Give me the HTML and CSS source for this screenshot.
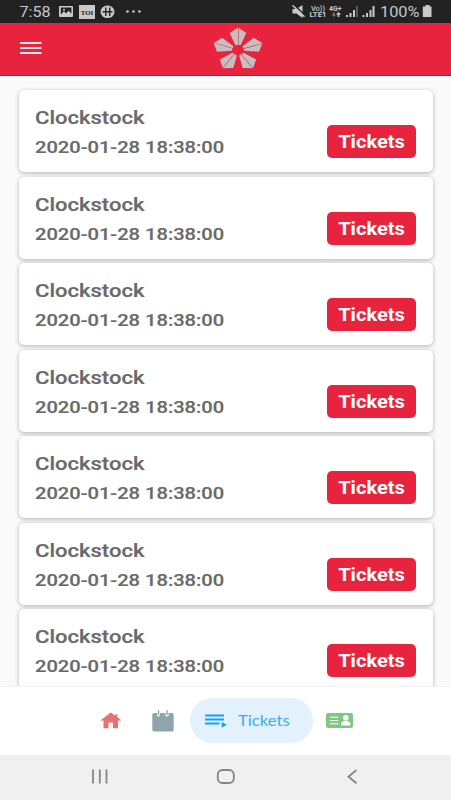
FILE: index.html
```html
<!DOCTYPE html>
<html lang="en">
<head>
<meta charset="utf-8">
<title>Tickets</title>
<link rel="stylesheet" href="styles.css">
</head>
<body>
<div class="status">
  <svg class="status-art" width="451" height="23" viewBox="0 0 451 23" fill="#c9c9c9">
    <text x="19.500" y="17" font-size="15.500" textLength="31" lengthAdjust="spacingAndGlyphs">7:58</text>
    <path fill-rule="evenodd" d="M60 6h12q1 0 1 1v9q0 1-1 1H60q-1 0-1-1V7q0-1 1-1zM60.800 7.500v7.300l3-3.500 2.300 2 2.600-2.500 2.700 3V7.500z"/>
    <circle cx="64" cy="9.700" r="1"/>
    <path d="M79 5h16v14H79z"/>
    <text class="serif" x="80.700" y="14.500" font-size="7" fill="#222" textLength="12.500" lengthAdjust="spacingAndGlyphs">TOI</text>
    <ellipse cx="107.500" cy="11.700" rx="7" ry="6.300"/>
    <path d="M105.800 7.500v8.500M109.700 7.500v8.500M102.500 11.700h10" stroke="#222" stroke-width="1.400" fill="none"/>
    <circle cx="127.500" cy="11.500" r="1.300"/><circle cx="133.500" cy="11.500" r="1.300"/><circle cx="139.500" cy="11.500" r="1.300"/>
    <path d="M292.500 9h4l6-4v13l-6-4.500h-4z"/>
    <path d="M293.500 4l12 12" stroke="#222" stroke-width="1.500"/><path d="M292.500 5.200l12 11.500" stroke="#c9c9c9" stroke-width="1.500"/>
    <text x="311" y="10.500" font-size="7" font-weight="500" textLength="14" lengthAdjust="spacingAndGlyphs">Vo))</text>
    <text x="309.500" y="17" font-size="7" font-weight="700" textLength="17" lengthAdjust="spacingAndGlyphs">LTE1</text>
    <text x="329" y="10.500" font-size="6.500" font-weight="700" textLength="12.500" lengthAdjust="spacingAndGlyphs">4G+</text>
    <path d="M333.800 17l-2.500-2.500h1.700v-2.300h1.500v2.300h1.700z" opacity=".5"/><path d="M338.500 12l2.700 2.500h-1.900v2.500h-1.600v-2.500h-1.900z"/>
    <path d="M346 15h2v2h-2zM349.500 13h2v4h-2zM353 10h2v7h-2z"/><path d="M356 6h2v11h-2z" opacity=".35"/>
    <path d="M362.500 15h2v2h-2zM366 13h2v4h-2zM369.500 10h2v7h-2zM372.500 6h2v11h-2z"/>
    <text x="380" y="17" font-size="15.500" textLength="39.500" lengthAdjust="spacingAndGlyphs">100%</text>
    <path d="M425.500 5h4v1.500h2V17h-8.700V6.500h2.700z"/>
  </svg>
</div>
<header class="appbar">
  <svg class="menu" width="22" height="14" viewBox="0 0 22 14"><path d="M0 2h21.500M0 7h21.500M0 12h21.500" stroke="#f8e5e8" stroke-width="2.200"/></svg>
  <svg class="logo" width="52" height="46" viewBox="-26 -23 52 46">
    <defs><path id="petal" d="M0-22.500L-7.300-17-2.400-5H0zM.5-22.200L7.300-17 2.400-5H.5z"/></defs>
    <g fill="#c4c0c0" transform="scale(1.140 1)">
      <use href="#petal"/><use href="#petal" transform="rotate(72)"/><use href="#petal" transform="rotate(144)"/><use href="#petal" transform="rotate(216)"/><use href="#petal" transform="rotate(288)"/>
    </g>
  </svg>
</header>
<main class="list">
  <article class="card"><div><h2 class="name">Clockstock</h2><p class="date">2020-01-28 18:38:00</p></div><a class="btn"><span>Tickets</span></a></article>
  <article class="card"><div><h2 class="name">Clockstock</h2><p class="date">2020-01-28 18:38:00</p></div><a class="btn"><span>Tickets</span></a></article>
  <article class="card"><div><h2 class="name">Clockstock</h2><p class="date">2020-01-28 18:38:00</p></div><a class="btn"><span>Tickets</span></a></article>
  <article class="card"><div><h2 class="name">Clockstock</h2><p class="date">2020-01-28 18:38:00</p></div><a class="btn"><span>Tickets</span></a></article>
  <article class="card"><div><h2 class="name">Clockstock</h2><p class="date">2020-01-28 18:38:00</p></div><a class="btn"><span>Tickets</span></a></article>
  <article class="card"><div><h2 class="name">Clockstock</h2><p class="date">2020-01-28 18:38:00</p></div><a class="btn"><span>Tickets</span></a></article>
  <article class="card"><div><h2 class="name">Clockstock</h2><p class="date">2020-01-28 18:38:00</p></div><a class="btn"><span>Tickets</span></a></article>
</main>
<nav class="tabs">
  <svg class="home" width="22" height="18" viewBox="0 0 22 18"><path fill="#e57373" d="M10.800 1.500l4.700 3.300V3.300h1.800v2.800L21.300 9.500H18v7.700h-5v-5.700H8.500v5.700H3.500V9.500H.3z"/></svg>
  <svg class="cal" width="22" height="22" viewBox="0 0 22 22"><path fill="#90a4ae" d="M2 3h3v3.200h3V3h5.500v3.200h3V3H20q1.700 0 1.700 1.700v15q0 1.800-1.700 1.800H2Q.3 21.500.3 19.700v-15Q.3 3 2 3zM5.800.3h1.400v5H5.800zM14.300.3h1.400v5h-1.400z"/></svg>
  <a class="active">
    <svg width="22" height="14" viewBox="0 0 22 14"><path d="M0 1.500h19M0 5.500h19M0 9.500h14.500" stroke="#12a4ee" stroke-width="1.900"/><path fill="#12a4ee" d="M16.700 8l5.100 2.800-5.100 2.900z"/></svg>
    <span>Tickets</span>
  </a>
  <svg class="id" width="27" height="15" viewBox="0 0 27 15"><rect width="27" height="15" rx="2" fill="#81c784"/><path d="M4 4.200h8.300M4 7.500h8.300M4 10.800h8.300" stroke="#fff" stroke-width="1"/><circle cx="19.800" cy="4.800" r="2.800" fill="#fff"/><path fill="#fff" d="M15 12.500v-1.200q0-3.300 4.700-3.300t4.700 3.300v1.200z"/></svg>
</nav>
<footer class="sys">
  <svg width="451" height="45" viewBox="0 0 451 45" fill="none" stroke="#858585" stroke-width="1.800"><path d="M93 14.500v14M99.800 14.500v14M106.500 14.500v14"/><rect x="217.800" y="15" width="16" height="13" rx="4.500"/><path d="M356.500 15l-8 6.700 8 6.500"/></svg>
</footer>
</body>
</html>
```
FILE: styles.css
```css
* { box-sizing: border-box; }
body {
  margin: 0;
  width: 451px;
  height: 800px;
  display: flex;
  flex-direction: column;
  overflow: hidden;
  background: #fafafa;
  font-family: Roboto, sans-serif;
}
svg { display: block; flex: none; }
.status { height: 23px; flex: none; background: #222; }
.serif { font-family: "Liberation Serif", serif; font-weight: 700; }
.appbar {
  height: 53px;
  flex: none;
  display: flex;
  align-items: flex-start;
  background: #e8233e;
  border-bottom: 1px solid #cd1030;
}
.menu { margin: 18px 0 0 20px; }
.logo { margin: 4px 0 0 170px; }
.list {
  flex: 1;
  min-height: 0;
  overflow: hidden;
  padding: 14px 18px 0 19px;
  display: flex;
  flex-direction: column;
  gap: 4.500px;
}
.card {
  height: 82px;
  flex: none;
  display: flex;
  justify-content: space-between;
  padding: 0 17px 0 16px;
  background: #fff;
  border-radius: 5px;
  box-shadow: 0 1px 4px rgba(0, 0, 0, .3);
}
.name, .date { margin: 0; font-weight: 500; color: #696969; white-space: nowrap; transform-origin: 0 0; }
.name { margin-top: 16px; font-size: 19px; line-height: 24px; transform: scaleX(1.160); -webkit-text-stroke: .2px #696969; }
.date { margin-top: 5px; font-size: 17.300px; line-height: 24px; transform: scaleX(1.163); width: 160px; -webkit-text-stroke: .2px #696969; }
.btn {
  width: 89px;
  height: 33px;
  margin-top: 35px;
  display: flex;
  align-items: center;
  justify-content: center;
  border-radius: 5px;
  background: #e8233e;
  color: #fff;
  font-weight: 700;
  font-size: 17.800px;
}
.btn span { transform: translateY(.4px) scaleX(1.130); }
.tabs {
  height: 69px;
  flex: none;
  display: flex;
  background: #fff;
  border-top: 1px solid #f2f2f2;
}
.home { margin: 24px 0 0 100px; }
.cal { margin: 23px 0 0 30px; }
.active {
  width: 123px;
  height: 45px;
  margin: 11px 0 0 16px;
  padding-left: 15px;
  display: flex;
  align-items: center;
  border-radius: 23px;
  background: #e3f1fd;
  color: #35b0ee;
}
.active span {
  margin-left: 11px;
  font: 400 15px Lato, sans-serif;
  transform: translateY(-1px) scaleX(1.110);
  transform-origin: 0 50%;
}
.id { margin: 26px 0 0 13px; }
.sys { height: 45px; flex: none; background: #f0f0f0; }
```
